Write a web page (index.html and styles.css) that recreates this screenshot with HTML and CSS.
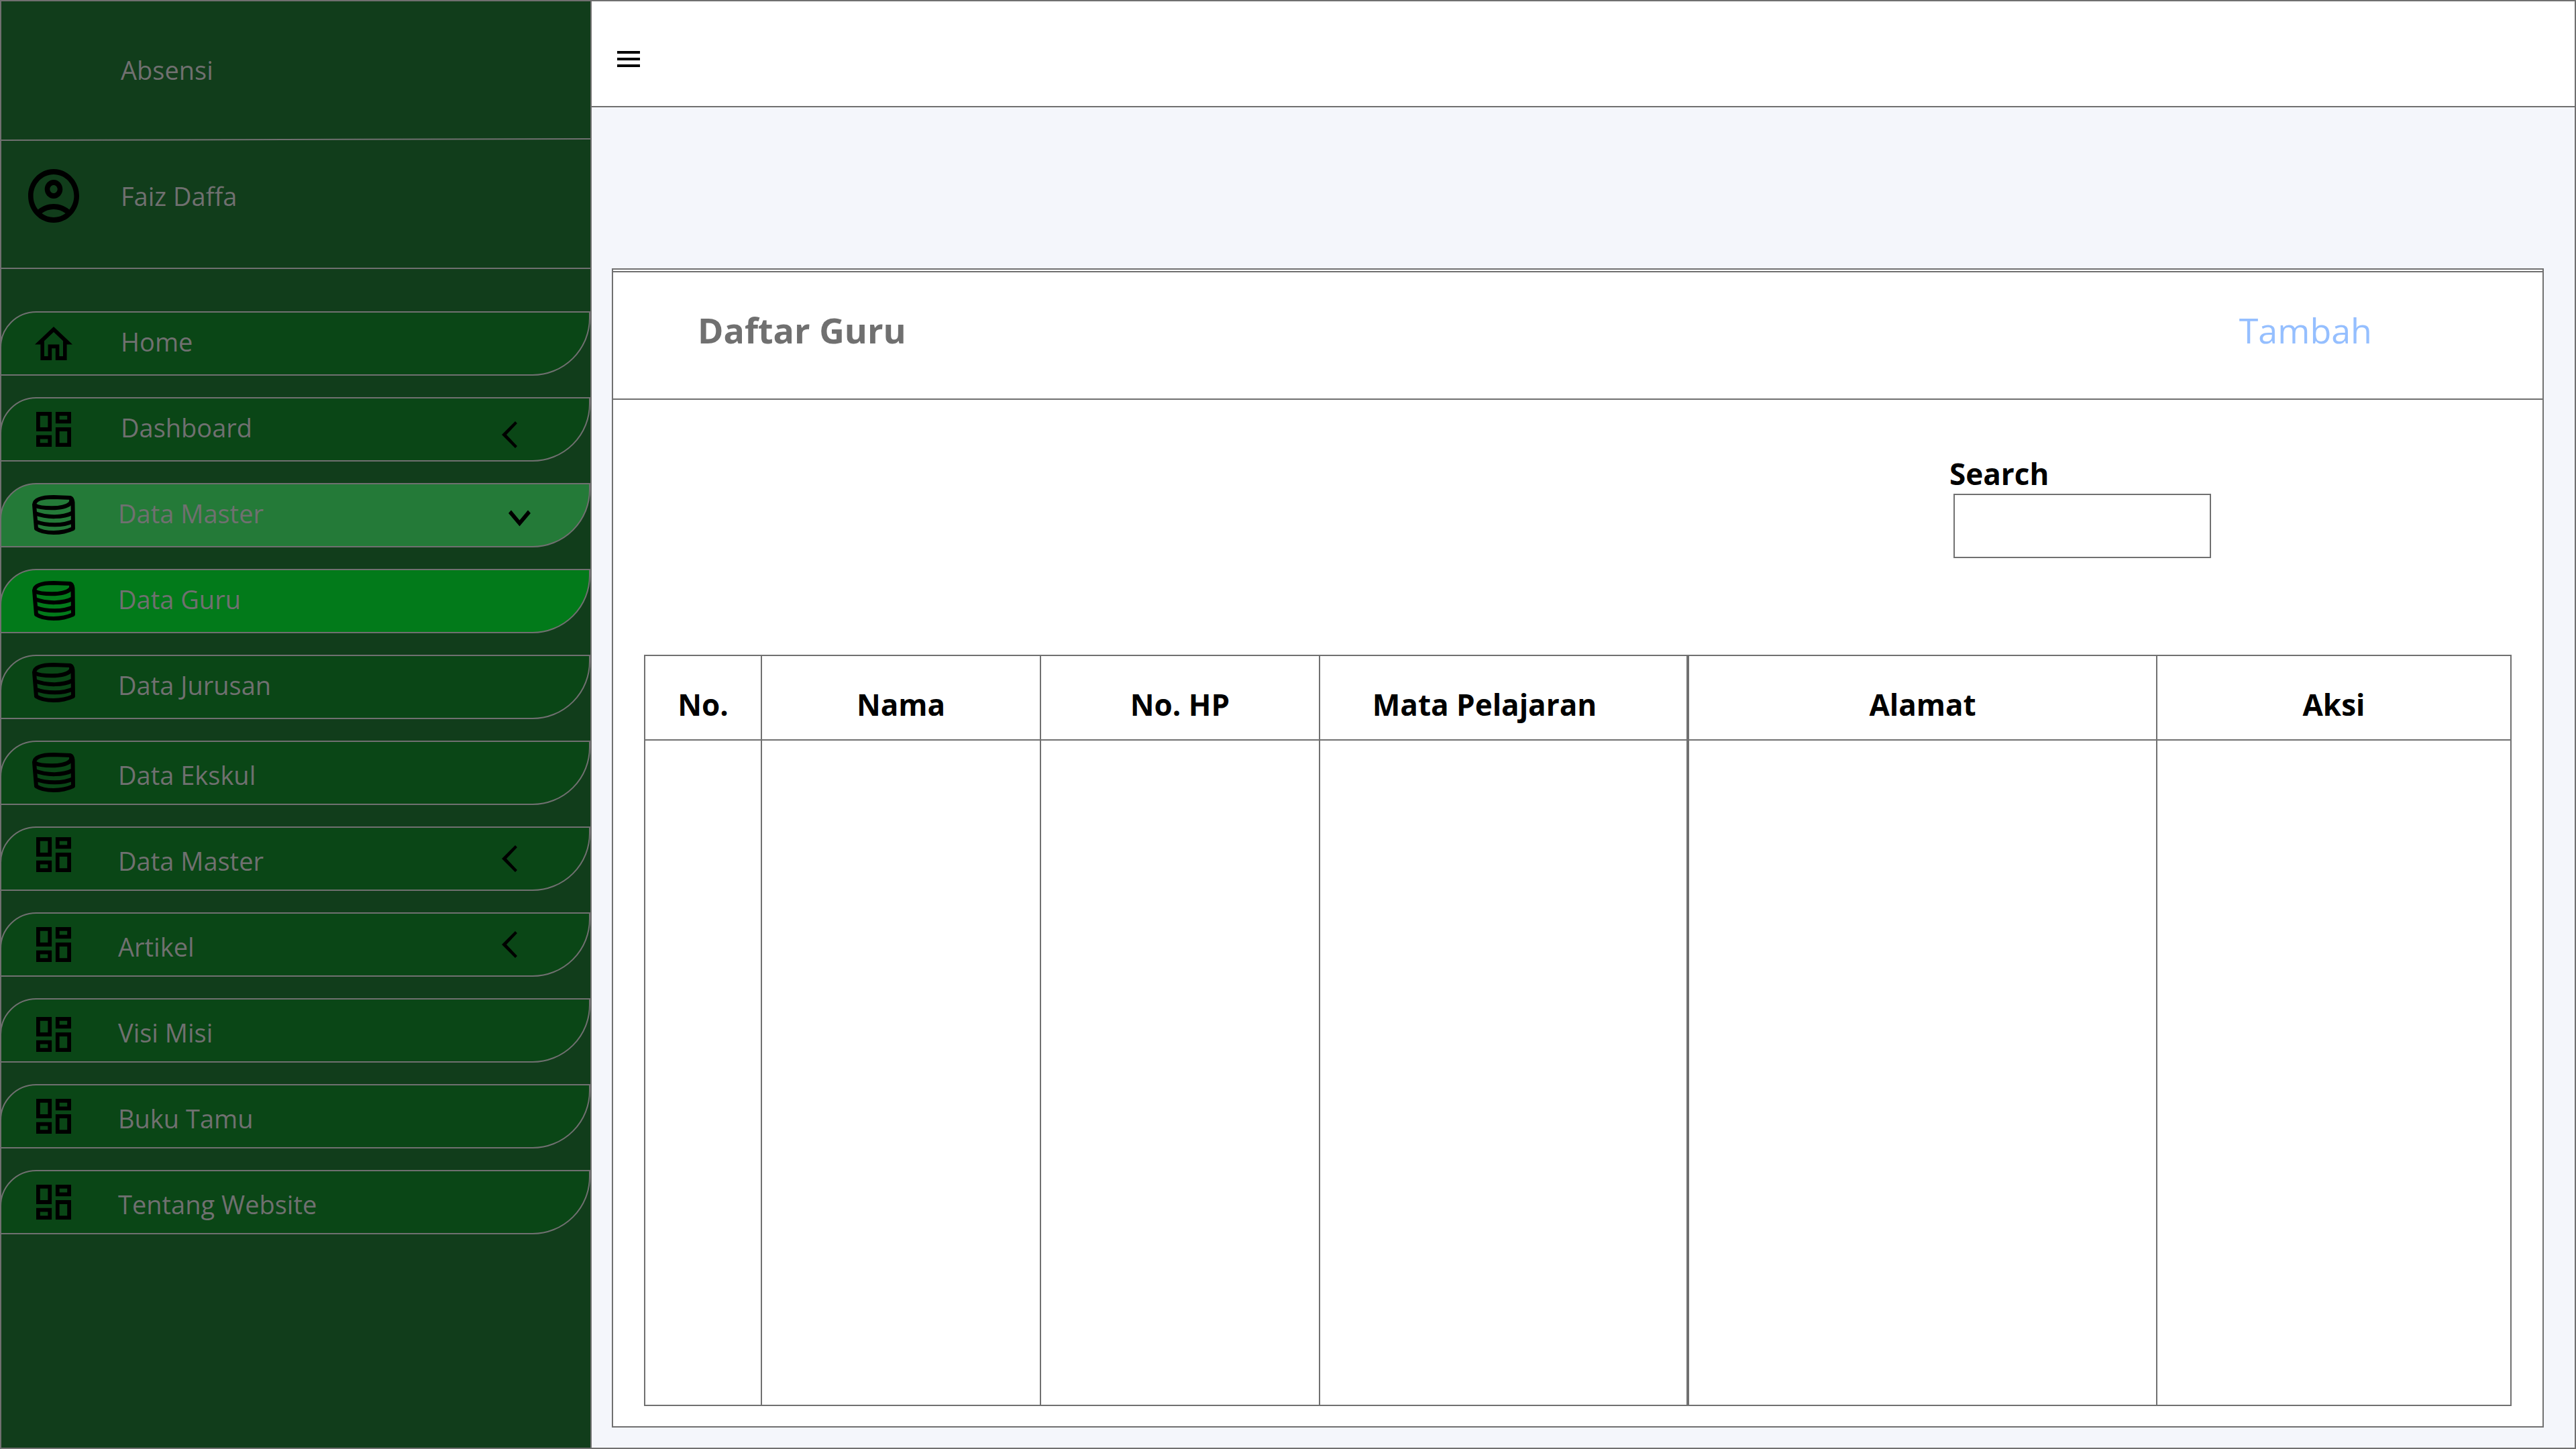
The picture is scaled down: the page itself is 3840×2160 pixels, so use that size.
FILE: index.html
```html
<!DOCTYPE html>
<html lang="id">
<head>
<meta charset="utf-8">
<meta name="viewport" content="width=device-width, initial-scale=1">
<title>Absensi - Daftar Guru</title>
<link rel="stylesheet" href="styles.css">
</head>
<body>
<svg class="sprite" aria-hidden="true">
  <symbol id="i-user" viewBox="2 2 20 20" preserveAspectRatio="none"><path d="M12 2C6.480 2 2 6.480 2 12s4.480 10 10 10 10-4.480 10-10S17.520 2 12 2zM7.350 18.500C8.660 17.560 10.260 17 12 17s3.340.560 4.650 1.500C15.340 19.440 13.740 20 12 20s-3.340-.560-4.650-1.500zm10.790-1.380C16.450 15.800 14.320 15 12 15s-4.450.800-6.140 2.120C4.700 15.730 4 13.950 4 12c0-4.420 3.580-8 8-8s8 3.580 8 8c0 1.950-.700 3.730-1.860 5.120z"/><path d="M12 6c-1.930 0-3.500 1.570-3.500 3.500S10.070 13 12 13s3.500-1.570 3.500-3.500S13.930 6 12 6zm0 5c-.830 0-1.500-.670-1.500-1.500S11.170 8 12 8s1.500.670 1.500 1.500S12.830 11 12 11z"/></symbol>
  <symbol id="i-home" viewBox="2 3 20 17" preserveAspectRatio="none"><path d="M12 5.690l5 4.500V18h-2v-6H9v6H7v-7.810l5-4.500M12 3L2 12h3v8h6v-6h2v6h6v-8h3L12 3z"/></symbol>
  <symbol id="i-grid" viewBox="3 3 18 18"><path d="M19 5v2h-4V5h4M9 5v6H5V5h4m10 8v6h-4v-6h4M9 17v2H5v-2h4M21 3h-8v6h8V3zM11 3H3v10h8V3zm10 8h-8v10h8V11zm-10 4H3v6h8v-6z"/></symbol>
  <symbol id="i-data" viewBox="0 0 64 60"><g fill="none" stroke="#000" stroke-width="6" stroke-linejoin="round"><path d="M3 14C4 6 16 3 32 3L57 4Q60 5 60.500 11L61 50Q48 56 32 56Q15 56 6 50Z"/><path d="M3.500 15C12 20 46 22 56 13Q59 10 58 5"/><path d="M4 27C22 34 46 34 61 26"/><path d="M5 39.500C22 46 46 46 61 39"/></g></symbol>
  <symbol id="i-left" viewBox="0 0 23 40"><path d="M0 20L20 0l3 3L7 20l16 17-3 3z"/></symbol>
  <symbol id="i-down" viewBox="0 0 33 24"><path d="M4 0l12.500 15L29 0l4 4.500L16.500 24 0 4.500z"/></symbol>
</svg>
<div class="app">
  <aside class="sidebar">
    <div class="brand">Absensi</div>
    <svg class="divider" viewBox="0 0 880 4" preserveAspectRatio="none" aria-hidden="true"><path d="M0 3L880 1"/></svg>
    <div class="user">
      <svg class="icon-user" aria-hidden="true"><use href="#i-user"/></svg>
      <span>Faiz Daffa</span>
    </div>
    <nav class="nav">
      <a class="nav-link nav-link--main" href="#"><span class="slot"><svg class="icon-home"><use href="#i-home"/></svg></span><span class="label">Home</span></a>
      <a class="nav-link nav-link--main" href="#"><span class="slot"><svg class="icon-grid"><use href="#i-grid"/></svg></span><span class="label">Dashboard</span><svg class="chev chev--low"><use href="#i-left"/></svg></a>
      <a class="nav-link nav-link--open" href="#"><span class="slot"><svg class="icon-data"><use href="#i-data"/></svg></span><span class="label">Data Master</span><svg class="chev-down"><use href="#i-down"/></svg></a>
      <a class="nav-link nav-link--active" href="#" aria-current="page"><span class="slot"><svg class="icon-data"><use href="#i-data"/></svg></span><span class="label">Data Guru</span></a>
      <a class="nav-link" href="#"><span class="slot slot--up"><svg class="icon-data"><use href="#i-data"/></svg></span><span class="label">Data Jurusan</span></a>
      <a class="nav-link nav-link--low" href="#"><span class="slot"><svg class="icon-data"><use href="#i-data"/></svg></span><span class="label">Data Ekskul</span></a>
      <a class="nav-link nav-link--low" href="#"><span class="slot slot--up"><svg class="icon-grid"><use href="#i-grid"/></svg></span><span class="label">Data Master</span><svg class="chev"><use href="#i-left"/></svg></a>
      <a class="nav-link nav-link--low" href="#"><span class="slot"><svg class="icon-grid"><use href="#i-grid"/></svg></span><span class="label">Artikel</span><svg class="chev"><use href="#i-left"/></svg></a>
      <a class="nav-link nav-link--low" href="#"><span class="slot slot--down"><svg class="icon-grid"><use href="#i-grid"/></svg></span><span class="label">Visi Misi</span></a>
      <a class="nav-link nav-link--low" href="#"><span class="slot"><svg class="icon-grid"><use href="#i-grid"/></svg></span><span class="label">Buku Tamu</span></a>
      <a class="nav-link nav-link--low" href="#"><span class="slot"><svg class="icon-grid"><use href="#i-grid"/></svg></span><span class="label">Tentang Website</span></a>
    </nav>
  </aside>
  <div class="page">
    <header class="topbar">
      <button class="menu" type="button" aria-label="Menu"><span></span><span></span><span></span></button>
    </header>
    <main class="content">
      <section class="card">
        <div class="card-head">
          <h1 class="title">Daftar Guru</h1>
          <a class="add" href="#">Tambah</a>
        </div>
        <div class="card-body">
          <div class="search">
            <label for="q">Search</label>
            <input id="q" type="text">
          </div>
          <div class="table-wrap">
            <table>
              <colgroup><col class="c-no"><col class="c-name"><col class="c-name"><col class="c-subject"><col class="c-address"><col class="c-action"></colgroup>
              <thead><tr><th>No.</th><th>Nama</th><th>No. HP</th><th class="subject">Mata Pelajaran</th><th>Alamat</th><th>Aksi</th></tr></thead>
              <tbody><tr><td></td><td></td><td></td><td class="subject"></td><td></td><td></td></tr></tbody>
            </table>
          </div>
        </div>
      </section>
    </main>
  </div>
</div>
</body>
</html>
```
FILE: styles.css
```css
* { box-sizing: border-box; }

body {
  margin: 0;
  font-family: "Open Sans", "Noto Sans", sans-serif;
  font-size: 38px;
  line-height: 56px;
  color: #000;
}

.sprite { display: none; }

.app {
  display: flex;
  min-height: 100vh;
  border: 2px solid #707070;
  background: #f4f6fb;
}

/* Sidebar */
.sidebar {
  flex: 0 0 880px;
  border-right: 2px solid #707070;
  background: #113d1b;
  color: #707070;
}

.brand { padding: 74px 0 74px 178px; }

.divider { display: block; width: 100%; height: 4px; }
.divider path { fill: none; stroke: #707070; stroke-width: 2; }

.user {
  display: flex;
  align-items: center;
  gap: 62px;
  padding: 42px 0 67px 40px;
  border-bottom: 2px solid #707070;
}
.icon-user { width: 76px; height: 80px; }

.nav {
  display: flex;
  flex-direction: column;
  gap: 32px;
  margin-left: -2px;
  padding: 63px 0;
}

.nav-link {
  display: flex;
  align-items: center;
  gap: 64px;
  height: 96px;
  padding-left: 46px;
  border: 2px solid #707070;
  border-radius: 54px 0 86px 0;
  background: #0a4616;
  color: #707070;
  text-decoration: none;
}
.nav-link--main { gap: 68px; }
.nav-link--open { background: #247a38; }
.nav-link--active { background: #027a1a; }

.label { padding-bottom: 6px; }
.nav-link--low .label { padding: 6px 0 0; }

.slot { display: flex; justify-content: center; width: 64px; }
.slot--up { margin-bottom: 12px; }
.slot--down { margin-top: 12px; }

.icon-home { width: 56px; height: 50px; }
.icon-grid { width: 52px; height: 52px; }
.icon-data { width: 64px; height: 60px; }

.chev { width: 23px; height: 40px; margin-left: auto; margin-right: 107px; }
.chev--low { margin-top: 16px; }
.chev-down { width: 33px; height: 25px; margin: 8px 87px 0 auto; }

/* Page */
.page { display: flex; flex: 1; flex-direction: column; min-width: 0; }

.topbar {
  display: flex;
  align-items: center;
  height: 158px;
  padding: 16px 38px 0;
  border-bottom: 2px solid #707070;
  background: #fff;
}

.menu {
  display: flex;
  flex-direction: column;
  gap: 6px;
  width: 34px;
  padding: 0;
  border: 0;
  background: none;
}
.menu span { height: 4px; background: #000; }

.content { display: flex; flex: 1; padding: 240px 46px 30px 30px; }

.card {
  display: flex;
  flex: 1;
  flex-direction: column;
  border: 2px solid #707070;
  background: #fff;
}

.card-head {
  display: flex;
  justify-content: space-between;
  margin-top: 2px;
  padding: 50px 254px 66px 126px;
  border: solid #707070;
  border-width: 2px 0;
  font-size: 52px;
  line-height: 72px;
}
.title { margin: 0; color: #707070; font-size: inherit; }
.add { color: #95bfff; text-decoration: none; }

.card-body {
  display: flex;
  flex: 1;
  flex-direction: column;
  gap: 144px;
  padding: 82px 46px 30px;
}

.search {
  display: flex;
  flex-direction: column;
  align-self: flex-end;
  gap: 2px;
  width: 390px;
  margin-right: 448px;
}
.search label { font-size: 44px; font-weight: 700; }
.search input {
  height: 96px;
  margin-left: 6px;
  padding: 0 16px;
  border: 2px solid #707070;
  background: #fff;
  font: inherit;
}

.table-wrap { display: flex; flex: 1; }

table {
  width: 100%;
  table-layout: fixed;
  border: solid #707070;
  border-width: 2px 0 0 2px;
  border-spacing: 0;
}
.c-no { width: 174px; }
.c-name { width: 416px; }
.c-subject { width: 550px; }
.c-action { width: 528px; }

th, td {
  padding: 0;
  border: solid #707070;
  border-width: 0 2px 2px 0;
}
th { height: 126px; padding-top: 20px; font-size: 44px; }
th.subject { padding-right: 56px; }
.subject { border-right-width: 4px; }
```
